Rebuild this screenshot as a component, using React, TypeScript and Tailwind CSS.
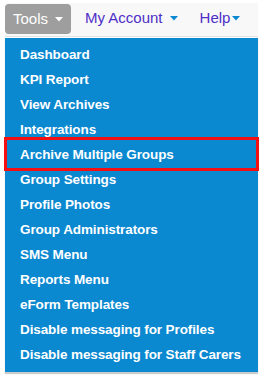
import { useState } from 'react'

const items = [
  'Dashboard',
  'KPI Report',
  'View Archives',
  'Integrations',
  'Archive Multiple Groups',
  'Group Settings',
  'Profile Photos',
  'Group Administrators',
  'SMS Menu',
  'Reports Menu',
  'eForm Templates',
  'Disable messaging for Profiles',
  'Disable messaging for Staff Carers',
]

function Caret({ className }: { className: string }) {
  return (
    <svg width="8" height="5" viewBox="0 0 8 5" className={className}>
      <path d="M0 0h8L4 4.5z" fill="currentColor" />
    </svg>
  )
}

export default function App() {
  const [highlighted] = useState('Archive Multiple Groups')

  return (
    <div className="w-[263px] h-[379px] bg-white pt-[3px] font-['Liberation_Sans',Arial,sans-serif]">
      <div className="mx-[5px] h-[34px] bg-[#f8f8f8] border-b border-[#e4e4e4] flex items-start text-[15px]">
        <div className="mt-[1px] h-[30px] w-[66px] rounded-[4px] bg-[#9e9e9e] text-white flex items-center pl-[8px] gap-[7px]">
          Tools
          <Caret className="text-white" />
        </div>
        <div className="h-[30px] flex items-center ml-[14px] text-[#4f2fc7] gap-[7px]">
          My Account
          <Caret className="text-[#0a88d0]" />
        </div>
        <div className="h-[30px] flex items-center ml-[22px] text-[#4f2fc7] gap-[2px]">
          Help
          <Caret className="text-[#0a88d0]" />
        </div>
      </div>
      <ul className="relative mx-[5px] mt-[1px] w-[253px] bg-[#0a88d0] pt-[5px] pb-[4px] shadow-[0_2px_1px_rgba(0,0,0,0.2)]">
        {items.map((item) => (
          <li
            key={item}
            className="relative h-[25px] flex items-center pl-[15px] text-white text-[13.5px] font-bold tracking-[-0.1px]"
          >
            {item}
            {item === highlighted && (
              <span className="absolute left-[-1px] right-[-1px] top-[-6px] bottom-[-3px] border-[3px] border-[#f40f13]" />
            )}
          </li>
        ))}
      </ul>
    </div>
  )
}
